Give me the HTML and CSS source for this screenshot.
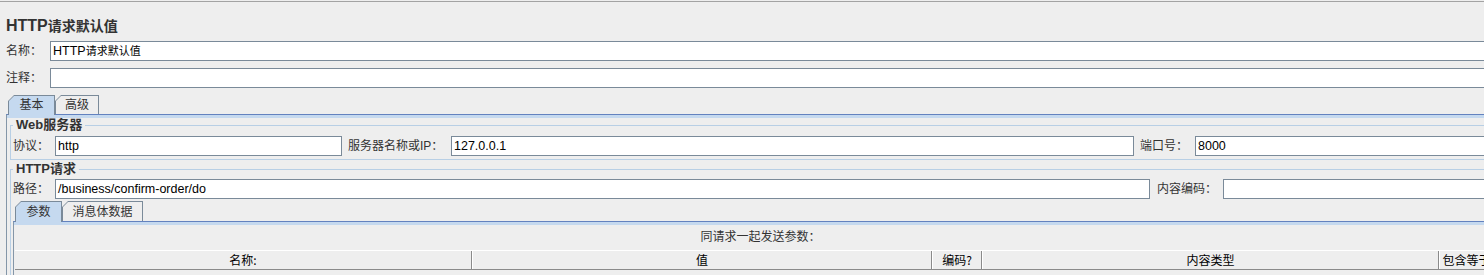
FILE: index.html
```html
<!DOCTYPE html>
<html lang="zh-CN">
<head>
<meta charset="utf-8">
<title>HTTP请求默认值</title>
<link rel="stylesheet" href="styles.css">
</head>
<body>
<div class="page">
  <h1 class="title"><span class="lat">HTTP</span>请求默认值</h1>
  <div class="row">
    <label class="lbl">名称：</label>
    <div class="field grow"><span class="lat">HTTP</span><span class="cjk">请求默认值</span></div>
  </div>
  <div class="row row2">
    <label class="lbl">注释：</label>
    <div class="field grow"></div>
  </div>

  <div class="tabs">
    <div class="tab sel w47">基本</div>
    <div class="tab w44">高级</div>
  </div>
  <div class="panel">
    <div class="band"></div>
    <div class="panel-body">
      <fieldset class="group g1">
        <legend>Web服务器</legend>
        <div class="frow">
          <label class="lbl l42">协议：</label>
          <div class="field f287">http</div>
          <label class="lbl l109">服务器名称或IP：</label>
          <div class="field f683">127.0.0.1</div>
          <label class="lbl l61">端口号：</label>
          <div class="field grow">8000</div>
        </div>
      </fieldset>
      <fieldset class="group g2">
        <legend>HTTP请求</legend>
        <div class="frow">
          <label class="lbl l42">路径：</label>
          <div class="field f1095">/business/confirm-order/do</div>
          <label class="lbl l73">内容编码：</label>
          <div class="field grow"></div>
        </div>
        <div class="tabs sub">
          <div class="tab sel w47">参数</div>
          <div class="tab w81">消息体数据</div>
        </div>
        <div class="spanel">
          <div class="band"></div>
          <div class="caption">同请求一起发送参数：</div>
          <div class="thead">
            <div class="th">名称:</div>
            <div class="th">值</div>
            <div class="th">编码?</div>
            <div class="th">内容类型</div>
            <div class="th">包含等于？</div>
          </div>
          <div class="tbody"></div>
        </div>
      </fieldset>
    </div>
  </div>
</div>
</body>
</html>
```
FILE: styles.css
```css
html, body {
  margin: 0;
  padding: 0;
}
body {
  background: #eeeeee;
  overflow: hidden;
  font-family: "Liberation Sans", "Noto Sans CJK SC", sans-serif;
  font-size: 12px;
  color: #333333;
}
.page {
  width: 1520px;
  box-sizing: border-box;
  padding: 0 6px;
  margin-top: 1px;
  border-top: 1px solid #a3a3a3;
}
.title {
  margin: 14px 0 0;
  height: 20px;
  line-height: 20px;
  font-size: 14px;
  font-weight: bold;
  color: #333333;
  white-space: nowrap;
}
.title .lat {
  font-size: 16px;
  line-height: 20px;
}
.row {
  display: flex;
  height: 20px;
  margin-top: 5px;
}
.row2 {
  margin-top: 7px;
}
.lbl {
  flex: none;
  width: 44px;
  line-height: 20px;
  white-space: nowrap;
  box-sizing: border-box;
}
.field {
  flex: none;
  height: 20px;
  box-sizing: border-box;
  border: 1px solid #7a8a99;
  background: #ffffff;
  padding-left: 2px;
  line-height: 18px;
  font-size: 12.5px;
  color: #000000;
  white-space: nowrap;
  overflow: hidden;
}
.field .cjk {
  font-size: 11px;
}
.grow {
  flex: 1 1 auto;
}
.f287 { width: 287px; }
.f683 { width: 683px; }
.f1095 { width: 1095px; }
.l42 { width: 42px; }
.l109 { width: 109px; padding-left: 6px; }
.l61 { width: 61px; padding-left: 6px; }
.l73 { width: 73px; padding-left: 7px; }

.tabs {
  display: flex;
  align-items: flex-start;
  height: 19px;
  margin: 7px 0 0 2px;
}
.tab {
  position: relative;
  z-index: 1;
  flex: none;
  height: 19px;
  box-sizing: border-box;
  padding-top: 3px;
  line-height: 14px;
  text-align: center;
  color: #333333;
  white-space: nowrap;
}
.tab::before {
  content: "";
  position: absolute;
  inset: 0;
  z-index: -1;
  background: #7a8a99;
  clip-path: polygon(0 6px, 6px 0, 100% 0, 100% 100%, 0 100%);
}
.tab::after {
  content: "";
  position: absolute;
  inset: 1px 1px 0 1px;
  z-index: -1;
  background: #eeeeee;
  clip-path: polygon(0 5px, 5px 0, 100% 0, 100% 100%, 0 100%);
}
.tab.sel {
  height: 20px;
  margin-bottom: -1px;
}
.tab.sel::after {
  background: #c5d9ef;
}
.w47 { width: 47px; }
.w44 { width: 44px; }
.w81 { width: 81px; }

.panel {
  border-top: 1px solid #6382bf;
  border-left: 1px solid #8496a8;
}
.band {
  height: 3px;
  background: #c5d9ef;
}
.panel-body {
  padding: 0 3px;
}
.group {
  margin: 0;
  min-width: 0;
  border: 1px solid #b8cfe5;
  padding: 4px 2px 3px;
}
.group legend {
  padding: 0 3px;
  font-size: 13px;
  line-height: 14px;
  font-weight: bold;
  color: #333333;
}
.g2 {
  margin-top: 2px;
  padding-top: 3px;
  padding-bottom: 0;
}
.frow {
  display: flex;
  height: 20px;
}
.tabs.sub {
  height: 20px;
  margin: 2px 0 0 2px;
}
.tabs.sub .tab {
  height: 20px;
  padding-top: 4px;
}
.tabs.sub .tab.sel {
  height: 21px;
}
.spanel {
  border-top: 1px solid #6382bf;
  border-left: 1px solid #8496a8;
  border-right: 1px solid #8496a8;
  padding: 0 1px;
}
.spanel .band {
  margin: 0 -1px;
}
.caption {
  height: 25px;
  line-height: 25px;
  text-align: center;
  color: #333333;
  white-space: nowrap;
}
.thead {
  display: grid;
  grid-template-columns: 457px 460px 50px 457px 1fr;
  height: 20px;
  box-sizing: border-box;
  border-top: 1px solid #ffffff;
  border-bottom: 1px solid #8a8a8a;
}
.th {
  border-left: 1px solid #ffffff;
  border-right: 1px solid #8a8a8a;
  text-align: center;
  line-height: 18px;
  font-family: "Noto Sans CJK SC", sans-serif;
  color: #000000;
  white-space: nowrap;
  overflow: hidden;
}
.th:first-child {
  border-left: none;
}
.tbody {
  height: 40px;
}
```
